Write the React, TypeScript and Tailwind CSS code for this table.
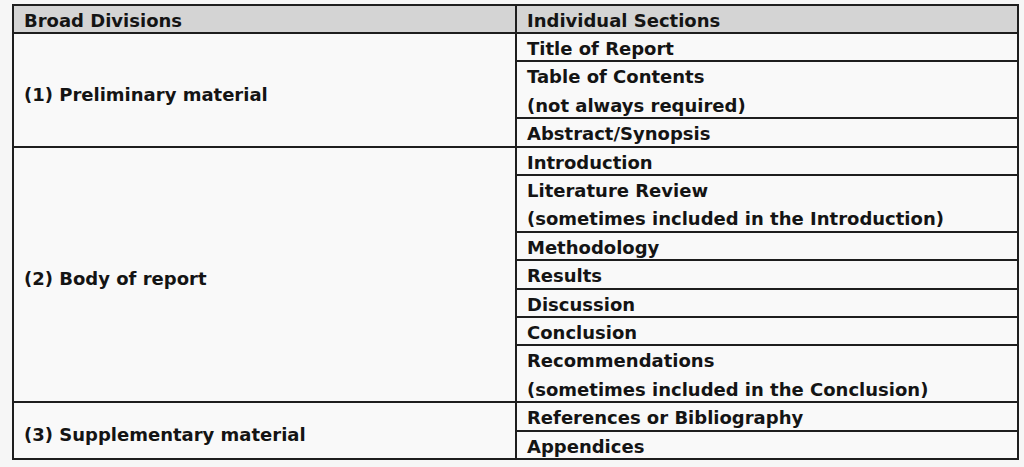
const groups = [
  {
    division: "(1) Preliminary material",
    sections: [["Title of Report"], ["Table of Contents", "(not always required)"], ["Abstract/Synopsis"]],
  },
  {
    division: "(2) Body of report",
    sections: [
      ["Introduction"],
      ["Literature Review", "(sometimes included in the Introduction)"],
      ["Methodology"],
      ["Results"],
      ["Discussion"],
      ["Conclusion"],
      ["Recommendations", "(sometimes included in the Conclusion)"],
    ],
  },
  {
    division: "(3) Supplementary material",
    sections: [["References or Bibliography"], ["Appendices"]],
  },
];

export default function App() {
  return (
    <div
      className="min-h-screen bg-[#f6f6f6] pt-[4px] pl-[12px] text-[#141414]"
      style={{ fontFamily: '"DejaVu Sans", "Liberation Sans", sans-serif' }}
    >
      <table className="w-[1007px] border-collapse border-2 border-[#1e1e1e] bg-[#f9f9f9] text-[18px] font-bold leading-[23.4px]">
        <thead>
          <tr className="bg-[#d4d4d4]">
            <th className="w-[503px] border-2 border-[#1e1e1e] pl-[10px] pt-[3px] text-left font-bold leading-[23px]">
              Broad Divisions
            </th>
            <th className="border-2 border-[#1e1e1e] pl-[10px] pt-[3px] text-left font-bold leading-[23px]">
              Individual Sections
            </th>
          </tr>
        </thead>
        <tbody>
          {groups.map((g) =>
            g.sections.map((lines, i) => (
              <tr key={g.division + i}>
                {i === 0 && (
                  <td rowSpan={g.sections.length} className="border-2 border-[#1e1e1e] pl-[10px] pt-[9px] align-middle">
                    {g.division}
                  </td>
                )}
                <td className="border-2 border-[#1e1e1e] pl-[10px] pt-[3px]">
                  <div className="flex flex-col gap-[5px]">
                    {lines.map((l) => (
                      <span key={l}>{l}</span>
                    ))}
                  </div>
                </td>
              </tr>
            ))
          )}
        </tbody>
      </table>
    </div>
  );
}
